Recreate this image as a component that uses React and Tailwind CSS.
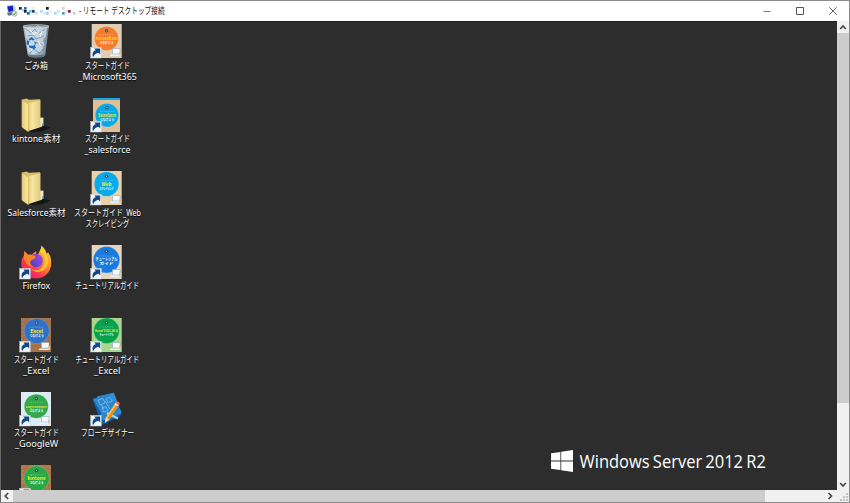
import { useLayoutEffect, useRef } from "react";

const FONT = "font-['Noto_Sans','Noto_Sans_CJK_JP',sans-serif]";

/* A single line of text squeezed horizontally to a known width. */
function Fit({ text, width, className = "" }) {
  const ref = useRef(null);
  useLayoutEffect(() => {
    const el = ref.current;
    const fit = () => {
      el.style.transform = `scaleX(${width / el.offsetWidth})`;
    };
    fit();
    document.fonts.ready.then(fit);
  }, [width]);
  return (
    <span className="flex justify-center" style={{ width }}>
      <span ref={ref} className={`shrink-0 whitespace-nowrap ${className}`}>{text}</span>
    </span>
  );
}

function Badge() {
  return (
    <g>
      <rect x="1.7" y="24.4" width="10.6" height="10.6" fill="#f2f5f8" stroke="#c4cad0" strokeWidth=".5" />
      <path d="M4 34.2c-1.2-3.8.2-6.2 2.8-6.9L5.4 25.6h5.8v5.8l-1.7-1.6c-2.2.2-4 1.6-5.5 4.4z" fill="#0f4788" />
    </g>
  );
}

function Guide({ bg, circle, cx = 17.5, cy = 15.5, r = 12, x = 2.7, w = 30, lines, color, strip, pattern, cut }) {
  return (
    <>
      <rect x={x} y="1" width={w} height="34" fill={bg} />
      {pattern && (
        <path d="M4 5h28M4 9h28M4 13h28M4 17h28M4 21h28M4 25h28M4 29h28M9 1v4m9-4v4M7 5v4m20-4v4M5 21v4m26-4v4M7 25v4m20-4v4M9 29v5m18-5v5" stroke="#93623e" strokeWidth=".4" fill="none" />
      )}
      {strip && <rect x={x} y="1" width={w} height="2" fill={strip} />}
      <circle cx={cx} cy={cy} r={r} fill={circle} stroke="#fff" strokeOpacity=".25" strokeWidth=".6" />
      <circle cx={cx} cy={cy - r * 0.64} r="1.7" fill="#39506a" />
      <circle cx={cx} cy={cy - r * 0.64} r=".6" fill="#cfdbe6" />
      <path d={`M${cx - 7} ${cy - 3.8}h14`} stroke="#fff" strokeOpacity=".45" strokeWidth=".6" strokeDasharray="1.2 .6" />
      <text x={cx} y={cy + 1.6} textAnchor="middle" fontSize={lines[2] || 4} textLength={lines[3] || 16} lengthAdjust="spacingAndGlyphs" fontWeight="bold" fill={color}>{lines[0]}</text>
      <text x={cx} y={cy + 5.6} textAnchor="middle" fontSize="3.4" textLength="14" lengthAdjust="spacingAndGlyphs" fontWeight="bold" fill="#fff">{lines[1]}</text>
      {!cut && (
        <g>
          <path d="M23.5 25.5h7.5v5.5h-7.5z" fill="#f7fafc" stroke="#7f9fb4" strokeWidth=".5" />
          <path d="M21.5 31.5h9l1.5 1.4H21z" fill="#eef2f5" />
          <path d="M30 29h2.2v3.5H30z" fill="#d9c6a8" />
        </g>
      )}
      <Badge />
    </>
  );
}

function Folder() {
  return (
    <>
      <path d="M22 28l11 2.5-9 4-13 .5z" fill="#161616" />
      <path d="M4 2.6L9 1.4l1.6 1.4 10.6-.6c.7 0 1.1.4 1.1 1v26.5L10.5 33z" fill="#d9bd6c" />
      <path d="M9.6 6.4L22.3 3.2v17.4l1.5.6v8.6L10.5 34z" fill="url(#folderInner)" />
      <path d="M3.8 2.4l6 4.3c.5.4.7.8.7 1.4V35l-6-4.2c-.4-.3-.7-.6-.7-1.2z" fill="url(#folderFront)" stroke="#b8983f" strokeWidth=".4" />
      <path d="M22.6 20.8l2.8-.3v8.3l-2.8 1z" fill="#f0ead0" />
      <path d="M24 26.5l1.2-.2v2.4l-1.2.4z" fill="#4c9dce" />
    </>
  );
}

function RecycleBin() {
  return (
    <>
      <path d="M5 3.5L31 3 27.2 32.2c-1.2 2.6-16 2.6-17.4 0z" fill="url(#binGlass)" />
      <path d="M7 6l5-3 4 2 4-3 5 3 4-1-1.2 10-3 3 1.6 4-3 8-8 2-5-2-1.6-8 2-3-3-4z" fill="#d2e0eb" opacity=".75" />
      <path d="M8 6l5 4 4-4 3 5 7-5M9 13l6-1 3 4 8-3M11 23l5 2 2-6 7 3M12 30l4-4 5 4 4-4" stroke="#70889b" strokeWidth=".8" fill="none" />
      <path d="M12 7l4 5 2-3 4 3M20 18l3 5M11 18l3 10M24 8l-2 6" stroke="#fff" strokeWidth="1" fill="none" />
      <path d="M10.5 16l3.3-2 3 2.8-2 .8-1.8-1.2-1.3 1.3zM8.8 17.5l2.7.4-.7 4.4-2-1zM11 22.5l4.6.2.6-1.3 1.8 3-2.6 2.4-.2-1.4-3.6-.5zM16.7 17.7l1.8 3.3-2-.2z" fill="#176bc3" />
      <ellipse cx="18" cy="3.5" rx="13" ry="1.8" fill="#a1b1bd" fillOpacity=".5" stroke="#dce4e9" strokeWidth=".7" />
      <path d="M10 31c2 1.6 15 1.6 17 0l-.3 2c-2 2-14.7 2-16.4 0z" fill="#687683" />
    </>
  );
}

function Firefox() {
  return (
    <>
      <path d="M18 34.5C9 34.5 3 28 3.3 19.3c.1-3.5 1.2-5.8 2.7-8l.5-4.4 3.4 3.8 4.1.1c1.5-2 3-3 4.7-3.3-1 1.7-.8 3 .2 4.4l3.5-5.8c1.1-1.8 1-3 .6-4.7 3.2 2.2 5 5.3 5.6 8.4l1.4-1.6c2.5 3.5 3.3 7 3.2 11.1C33 28 27 34.5 18 34.5z" fill="url(#fox)" />
      <path d="M21.5 7c4.4 3.4 6.3 8 4.6 13.2C24.3 26 17.8 28 12.8 24.6c4 5.3 12.5 4.2 15.8-1.5C31.7 17.5 29.3 9.2 23 1.8c.4 2-.2 3.5-1.5 5.2z" fill="#ffd33d" opacity=".8" />
      <circle cx="18" cy="16.5" r="6.8" fill="url(#globe)" />
      <path d="M6 11.3l.5-4.4 3.4 3.8 4.1.1 3.7 2c-.2 2.6-4 2.6-5.1 4.1-1.4 2.2.3 5 3 6-5.7-.3-10-5-9.6-11.6z" fill="#ff8428" />
      <Badge />
    </>
  );
}

function FlowDesigner() {
  return (
    <>
      <path d="M3.5 8.3L23.4 2l8.5 23.1L13 34z" fill="#115fa9" />
      <path d="M8 5.5L25 1.8 32.5 22.4 14 29.6z" fill="#2e91d9" />
      <path d="M4 8l16-5 12.7 17.4L17 30.8z" fill="#2b86cf" />
      <path d="M9 9l5-1.5 2 4.5-5 1.8zM17 8l4-1.8 2.3 4-4.3 1.6zM13 17l4-1.5 2 4-4.3 1.7zM16 10l5 8M12 13l3 5" stroke="#88c4ef" strokeWidth=".7" fill="none" />
      <path d="M18.5 21l11 5.4-1 2.2-11-5.3z" fill="#a6d2ed" />
      <path d="M16.7 26.7L26 12.6l3.3 2.2-9.1 14-4.3 3z" fill="#ffc247" />
      <path d="M18 27.8l9.7-14.3 1.6 1.3-9.1 14z" fill="#e98916" />
      <path d="M26 12.6l1.1-1.6c1.5-1.2 4.4.7 3.4 2.2l-1.2 1.6z" fill="#ef685a" />
      <path d="M25.6 13.2l.8-1.2 3.3 2.2-.7 1.2z" fill="#e5edf2" />
      <path d="M16.7 26.7l3.5 2.1-4.3 3z" fill="#f5ddb4" />
      <Badge />
    </>
  );
}

const columns = [
  [
    { icon: <RecycleBin />, label: [["ごみ箱", 23.5]] },
    { icon: <Folder />, label: [["kintone素材", 48]] },
    { icon: <Folder />, label: [["Salesforce素材", 58]] },
    { icon: <Firefox />, label: [["Firefox", 28]] },
    {
      icon: <Guide bg="#a8744d" pattern circle="#2e71c7" cx={18.7} cy={14} r={12.6} x={3} color="#f4ec35" lines={["Excel", "つなげよう", 5.2, 13]} />,
      label: [["スタートガイド", 45], ["_Excel", 26]],
    },
    {
      icon: <Guide bg="#dcebf4" circle="#30a84b" cx={18.3} cy={15.2} r={12} x={3} color="#e6ed38" lines={["Google Workspace", "つなげよう", 2.5, 21]} />,
      label: [["スタートガイド", 45], ["_GoogleW", 43]],
    },
    {
      icon: <Guide bg="#b5794c" pattern circle="#28a745" cx={18.5} cy={14.5} r={12.6} x={3} color="#f5ee22" lines={["kintone", "つなげよう", 5.2, 18]} cut />,
      label: [],
    },
  ],
  [
    {
      icon: <Guide bg="#dfcdb5" circle="#f47c2b" color="#ffdf20" lines={["Microsoft365", "つなげよう", 4, 22]} />,
      label: [["スタートガイド", 45], ["_Microsoft365", 58]],
    },
    {
      icon: <Guide bg="#dfc094" circle="#08a8e6" cx={18} cy={18.2} r={11.7} x={4} w={27} strip="#13a9e7" color="#efed35" lines={["Salesforce", "つなげよう", 4.2, 18]} cut />,
      label: [["スタートガイド", 45], ["_salesforce", 46]],
    },
    {
      icon: <Guide bg="#ead1a8" circle="#0aa9e9" cy={14} r={12.3} color="#f3ed37" lines={["Web", "スクレイピング", 5.2, 10]} />,
      label: [["スタートガイド_Web", 67], ["スクレイピング", 44]],
    },
    {
      icon: <Guide bg="#e6d5bd" circle="#197bdd" cy={15.8} r={13.2} color="#ffffff" lines={["チュートリアル", "ガイド", 4, 22]} />,
      label: [["チュートリアルガイド", 64]],
    },
    {
      icon: <Guide bg="#a9d58c" circle="#06a14a" cy={13.8} r={12.8} color="#e6ee27" lines={["Excelではじめる", "チュートリアル", 3.4, 23]} />,
      label: [["チュートリアルガイド", 64], ["_Excel", 26]],
    },
    { icon: <FlowDesigner />, label: [["フローデザイナー", 53]] },
  ],
];

function DesktopItem({ icon, label }) {
  return (
    <div className="flex h-[73.5px] w-[71.5px] shrink-0 flex-col items-center">
      <svg viewBox="0 0 36 36" className="h-9 w-9 shrink-0 font-['Noto_Sans_CJK_JP',sans-serif]">{icon}</svg>
      <div className="mt-[1.5px] flex flex-col items-center text-[8.7px] leading-[11px] text-white [text-shadow:0_1px_1px_#000]">
        {label.map(([text, width]) => (
          <Fit key={text} text={text} width={width} />
        ))}
      </div>
    </div>
  );
}

function Chevron({ d }) {
  return (
    <svg viewBox="0 0 12 12" className="h-3 w-3 shrink-0">
      <path d={d} fill="none" stroke="#484848" strokeWidth="1.7" />
    </svg>
  );
}

/* Pixelated host name: x, y, colour of each block. */
const blocks = [
  [0, 0, "#232f39"], [3, 2, "#b5d3e6"], [5, 0, "#1e78ae"], [5, 3, "#0c2347"], [8, 5, "#1967a8"], [10, 3, "#7fb9df"],
  [13, 0, "#f3ebc7"], [13, 3, "#15487c"], [16, 5, "#c9e1ef"], [21, 3, "#b3dbef"], [24, 5, "#d9e8f1"],
  [27, 0, "#161c22"], [27, 5, "#a5d1ea"], [30, 3, "#f5eccd"], [35, 5, "#a7d3ec"], [38, 3, "#c4e2f3"],
  [43, 0, "#efd38c"], [43, 5, "#4b9ccb"], [46, 3, "#d8ecf7"], [49, 3, "#8c2037"], [54, 5, "#bcd3e2"],
];

export default function App() {
  return (
    <div className={`flex h-[503px] w-[850px] flex-col overflow-hidden border-r border-b border-t border-[#8b8b8b] bg-white ${FONT}`}>
      <svg className="absolute h-0 w-0">
        <defs>
          <linearGradient id="folderInner" x1="0" x2="1"><stop stopColor="#e3c871" /><stop offset=".35" stopColor="#f7e6a0" /><stop offset="1" stopColor="#e0c578" /></linearGradient>
          <linearGradient id="folderFront" x1="0" x2="1"><stop stopColor="#e6cc7b" /><stop offset="1" stopColor="#fbe9a1" /></linearGradient>
          <linearGradient id="binGlass" x1="0" x2="1"><stop stopColor="#a5b3bd" /><stop offset=".4" stopColor="#a9c1d3" /><stop offset="1" stopColor="#718492" /></linearGradient>
          <linearGradient id="fox" x1="1" y1="0" x2="0.2" y2="1"><stop stopColor="#ffe74a" /><stop offset=".4" stopColor="#ff9628" /><stop offset=".72" stopColor="#ff3b4e" /><stop offset="1" stopColor="#df1875" /></linearGradient>
          <linearGradient id="globe" x1="1" y1="0" x2="0" y2="1"><stop stopColor="#a94ee5" /><stop offset="1" stopColor="#453ebc" /></linearGradient>
        </defs>
      </svg>

      <header className="flex h-5 shrink-0 items-center bg-white pl-[6px]">
        <svg viewBox="0 0 12 12" className="h-3 w-3 shrink-0">
          <path d="M1.2 1.2l5.8-.7.8 5.7-5.5 1z" fill="#0923c4" stroke="#8999bc" strokeWidth=".6" />
          <path d="M7.4.8l2 .4.3 6.2-2 .6z" fill="#c6d0dc" />
          <path d="M.8 8l5-1 2.2 2.6-5.4 1.2z" fill="#5b6f8b" />
          <circle cx="8.5" cy="8.6" r="2.7" fill="#dce5dc" stroke="#7c8d80" strokeWidth=".5" />
          <path d="M7 8.6l1.1 1.2 1.8-2.5" stroke="#389347" fill="none" />
        </svg>
        <svg viewBox="0 0 58 9" className="ml-px mt-px h-[9px] w-[58px] shrink-0">
          {blocks.map(([x, y, c]) => (
            <rect key={`${x}-${y}`} x={x} y={y} width="2.7" height="2.7" fill={c} />
          ))}
        </svg>
        <div className="ml-[2px] text-[9px] text-[#111]">
          <Fit text="- リモート デスクトップ接続" width={86} />
        </div>
        <div className="ml-auto flex items-center gap-[25px] pr-3">
          <svg viewBox="0 0 8 8" className="h-2 w-2"><path d="M.5 4.5h7" stroke="#777" /></svg>
          <svg viewBox="0 0 8 8" className="h-2 w-2"><path d="M.5.5h7v7h-7z" fill="none" stroke="#555" /></svg>
          <svg viewBox="0 0 8 8" className="h-2 w-2"><path d="M.3.3l7.4 7.4M7.7.3L.3 7.7" stroke="#555" strokeWidth=".9" /></svg>
        </div>
      </header>

      <div className="flex h-[469px] shrink-0 border-l border-[#686868]">
        <main className="relative flex h-full w-[836px] shrink-0 items-start overflow-hidden border-t border-[#202020] bg-[#2d2d2d] pt-[1px]">
          {columns.map((items, i) => (
            <div key={i} className="-ml-[0.5px] flex flex-col">
              {items.map((item, j) => (
                <DesktopItem key={j} {...item} />
              ))}
            </div>
          ))}
          <div className="absolute left-[550px] top-[428px] flex items-center gap-[7px] text-white">
            <svg viewBox="0 0 22 22" className="h-[22px] w-[22px]">
              <path d="M0 3.3l9.4-1.3v8.5H0zM10.2 1.8L22 0v10.5H10.2zM0 11.5h9.4V20L0 18.7zM10.2 11.5H22V22l-11.8-1.7z" fill="#fff" />
            </svg>
            <div className="font-['Open_Sans',sans-serif] text-[18px] font-normal leading-[22px]">
              <Fit text="Windows Server 2012 R2" width={186} className="[word-spacing:-1.2px]" />
            </div>
          </div>
        </main>
        <aside className="flex h-full w-3 shrink-0 flex-col items-center bg-[#f1f1f1]">
          <div className="flex h-[12px] items-center"><Chevron d="M3.2 8L6 5l2.8 3" /></div>
          <div className="h-[370px] w-full bg-[#cdcdcd]" />
          <div className="mt-auto flex h-[13px] items-center"><Chevron d="M3.2 5L6 8l2.8-3" /></div>
        </aside>
      </div>

      <footer className="flex h-3 shrink-0 items-center border-l border-[#686868] bg-[#f1f1f1]">
        <Chevron d="M7.2 3L4.2 6l3 3" />
        <div className="h-full w-[752px] bg-[#cdcdcd]" />
        <div className="ml-auto flex items-center">
          <Chevron d="M4.5 3l3 3-3 3" />
          <svg viewBox="0 0 12 12" className="ml-px h-3 w-3">
            <path d="M9 3h2v2H9zM6 6h2v2H6zM9 6h2v2H9zM3 9h2v2H3zM6 9h2v2H6zM9 9h2v2H9z" fill="#c2c2c2" />
          </svg>
        </div>
      </footer>
    </div>
  );
}
